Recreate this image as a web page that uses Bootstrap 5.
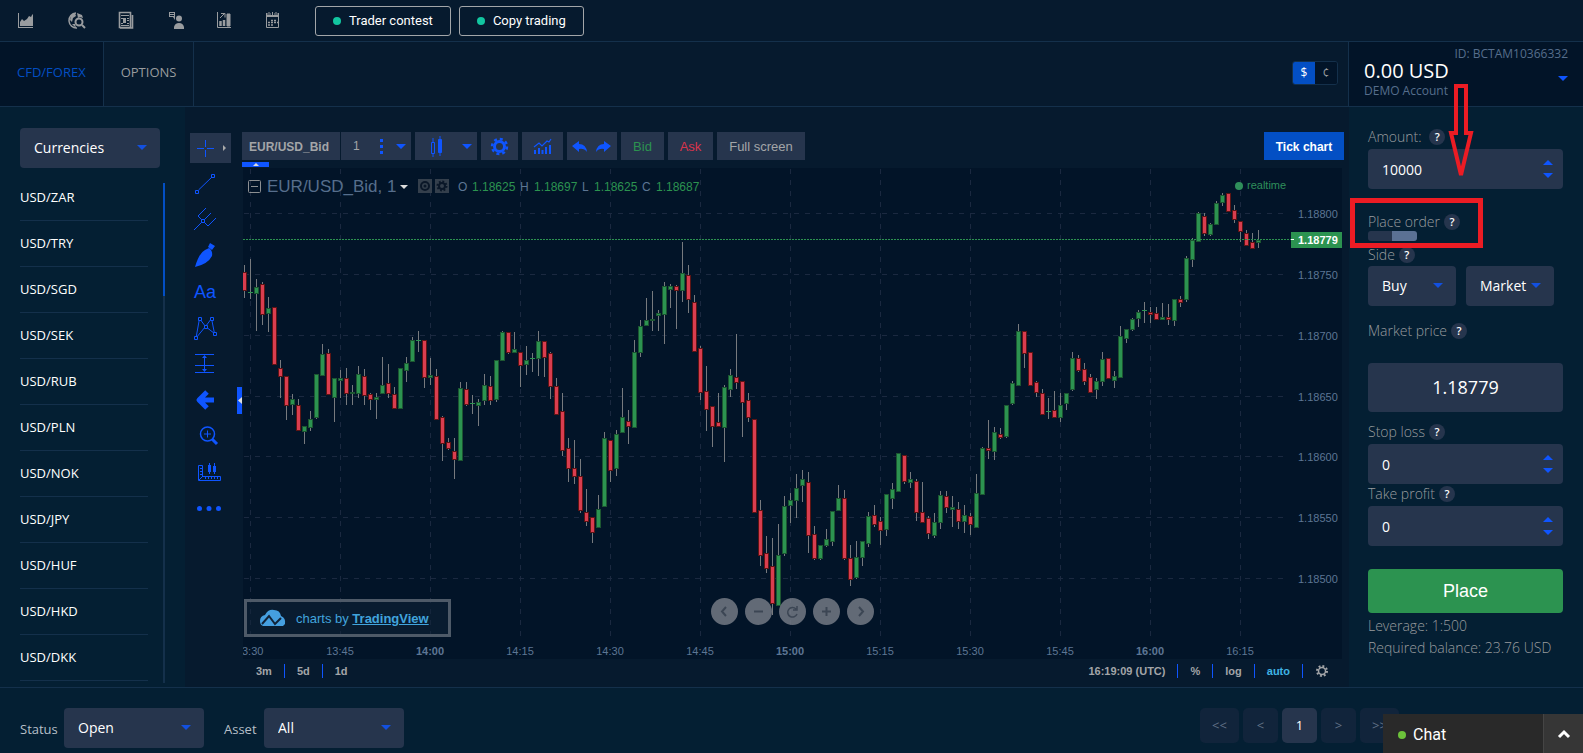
<!DOCTYPE html>
<html lang="en">
<head>
<meta charset="utf-8">
<meta name="viewport" content="width=device-width, initial-scale=1">
<title>CFD/Forex trading</title>
<link href="https://cdn.jsdelivr.net/npm/bootstrap@5.3.0/dist/css/bootstrap.min.css" rel="stylesheet">
<style>
  :root{--head:#061a2e;--page:#041f33;--pane:#021428;--line:#14304b;--field:#26354d;--blue:#0f55ff;--blue2:#034fc4;--grey:#999c9f;--slate:#566e8c;--green:#2c9350}
  body{background:var(--page);color:#fff;font:13px/20px "Open Sans",sans-serif;min-height:100vh}
  button,input,select{font-family:inherit;font-size:inherit;line-height:inherit;color:inherit}
  svg{display:block}
  .topbar{background:var(--head);border-bottom:1px solid var(--line);height:42px;padding-left:16px}
  .topicon{width:25px;height:24px;margin-right:24px;color:var(--grey);padding:0;border:0;background:none}
  .pill{height:30px;padding:0 17px;border:1px solid #a3a6a9;border-radius:3px;background:none;font:13px/20px Roboto,sans-serif}
  .pill.lead-pill{margin:0 8px 0 5px}
  .pill i{width:8px;height:8px;border-radius:50%;background:#12c6a0;margin-right:8px}
  .tabsrow{background:var(--head);border-bottom:1px solid var(--line);height:65px}
  .tabcell{border-right:1px solid var(--line);padding:0 17px 4px;color:var(--grey);text-decoration:none;height:100%}
  .tabcell.on{background:var(--pane);color:var(--blue2)}
  .unit{border:1px solid var(--line);border-radius:3px;height:24px;margin:0 10px 2px 0;font-size:12px}
  .unit button{width:22px;border:0;background:var(--pane);color:var(--grey);padding:0}
  .unit button.on{background:var(--blue2);color:#fff}
  .account{width:235px;border-left:1px solid var(--line);background:var(--pane);height:100%;padding:2px 15px;color:var(--slate);font-size:12px;position:relative}
  .account .balance{margin-top:-4px;line-height:18px}
  .account strong{font-size:20px;line-height:22px;font-weight:400;color:#fff}
  .tri{width:0;height:0;border:5px solid transparent;border-top-color:var(--blue);border-bottom:0}
  .tri.up{transform:rotate(180deg)}
  .account .tri{position:absolute;right:15px;top:34px}

  .pick{position:relative;height:40px}
  .pick select{appearance:none;width:100%;height:40px;border:0;border-radius:4px;background:var(--field);padding:0 14px;font-size:14px;outline:0}
  .pick::after{content:"";position:absolute;right:13px;top:17px;border:5px solid transparent;border-top-color:#1250e0;border-bottom:0;pointer-events:none}
  .sidebar{width:185px;padding:21px 20px 0}
  .sidewrap{position:relative;width:140px}
  .pairs{margin-top:7px;width:128px}
  .pairs a{height:46px;padding-bottom:2px;border-bottom:1px solid var(--line);color:#fff;text-decoration:none}
  .track{position:absolute;left:143px;top:55px;width:2px;height:500px;background:var(--line)}
  .track span{display:block;height:113px;background:var(--blue2)}

  .widget{background:var(--head);font-family:"Liberation Sans",sans-serif;min-width:0}
  .stage{min-width:0}
  .tools{width:58px;padding:26px 0 0 5px;position:relative;color:var(--blue)}
  .tools button{display:block;width:41px;height:36px;padding:0;border:0;background:none;color:inherit}
  .tools button.first{height:30px;background:var(--field);margin-bottom:3px}
  .tools button svg{overflow:visible}
  .handle{position:absolute;right:1px;top:280px;width:5px;height:27px;background:var(--blue)}
  .bar{height:61px;padding:25px 5px 0 0;margin-left:-1px;position:relative}
  .bar button{height:28px;border:0;background:var(--field);color:#a3a5a8;font-size:13px;line-height:28px;padding:1px 0 0;margin-right:4px}
  .bar .bold{font-size:12px;font-weight:700}
  .bar .pair{width:98px;padding-right:4px;margin-right:1px}
  .bar .period{width:70px;font-size:12px;padding:0 0 0 12px}
  .bar .style{width:62px}
  .bar .gear{width:37px}
  .bar .studies{width:41px}
  .bar .history{width:50px}
  .bar .bid{width:43px;color:var(--green)}
  .bar .ask{width:45px;color:#d9344c}
  .bar .full{width:88px}
  .bar .style svg,.bar .gear svg,.bar .studies svg,.bar .history svg{margin-top:-1px}
  .bar .tick{background:var(--blue2);color:#fff;width:80px;margin:0 0 0 auto}
  .bar .flap{position:absolute;left:0;top:55px;width:27px;height:5px;background:var(--blue)}
  .panewrap{position:relative;margin-right:7px}
  .pane{width:100%;height:auto;background:var(--pane);font-family:"Liberation Sans",sans-serif}
  .credit{position:absolute;left:1px;top:431px;width:207px;height:38px;padding:2px 0 0 13px;border:3px solid #4e5a68;background:#11233888;color:#41a4dd}
  .credit svg{margin:-2px 10px 0 0}
  .credit a{color:#41a4dd;font-weight:700}
  .navs{position:absolute;left:0;right:0;top:430px;gap:7px}
  .navs button{width:27px;height:27px;border:0;border-radius:50%;background:#7a808acc;color:#3c4654;padding:0}
  .foot{height:28px;padding:5px 8px 0 13px;color:#a3a5a8;font-size:11px;font-weight:700}
  .foot button{border:0;border-left:1px solid var(--blue);background:none;padding:0 12px;line-height:14px;font-weight:inherit}
  .foot button.plain{border-left:0;padding-left:0}
  .foot button.lit{color:#3fb4e4}

  .order{width:234px;padding:20px 20px 0 19px;font-size:14px;position:relative;color:var(--grey);font-weight:300}
  .order label{height:20px}
  .row22{height:22px}
  .order .order-label{margin-top:23px}
  .side-label{margin-top:3px}
  .sides{gap:10px}
  .price-label{margin-top:14px}
  .order .stop-label{margin-top:10px}
  .help{width:16px;height:16px;border-radius:50%;background:var(--field);color:#fff;font-size:11px;line-height:16px;font-weight:600;border:0;padding:0;margin-left:4px}
  .num{position:relative;height:40px;margin-top:2px}
  .num input{width:100%;height:40px;border:0;border-radius:4px;background:var(--field);color:#fff;font-weight:400;padding:0 14px;appearance:textfield;outline:0}
  .num input::-webkit-inner-spin-button{appearance:none}
  .num .spin{position:absolute;right:10px;top:11px;gap:8px}
  .half{width:88px;color:#fff;font-weight:400}
  .price{height:49px;margin-top:21px;padding-bottom:1px;border-radius:4px;background:var(--field);color:#fff;font-size:18px;font-weight:400}
  .switch{appearance:none;display:block;width:49px;height:10px;margin:-1px 0 0;border-radius:3px;background:linear-gradient(90deg,var(--field) 49%,#5b7194 49%)}
  .place{height:44px;margin-top:23px;border:0;border-radius:4px;background:var(--green);color:#fff;font:18px/20px "Liberation Sans",sans-serif}
  .terms{margin-top:3px}
  .marker{position:absolute;pointer-events:none}
  .marker.box{left:1px;top:91px;width:133px;height:50px;border:5px solid #ec1c24}
  .marker.arrow{left:98px;top:-23px}

  .bottom{border-top:1px solid var(--line);height:66px;padding:20px 184px 0 20px;color:#b6bfc8}
  .bottom label{width:44px;padding-top:11px}
  .bottom label.later{width:60px;padding-left:20px}
  .bottom .pick{width:140px;color:#fff}
  .pager button{height:35px;width:35px;border:0;border-radius:5px;background:#11243b;color:#617186;margin-right:4px;padding:0 0 2px}
  .pager button.wide{width:39px}
  .pager button.on{background:var(--field);color:#fff}
  .chat{position:fixed;right:0;bottom:0;width:200px;height:39px;background:#292929;border:0;padding:0;color:#fff;font:16px/20px Roboto,sans-serif}
  .chat i{width:8px;height:8px;border-radius:50%;background:#6cc23a;margin:2px 7px 0 15px}
  .chat b{font-weight:400;padding-top:2px}
  .chat .fold{width:40px;height:100%;background:#363636;border-left:1px solid #454545}
</style>
</head>
<body class="d-flex flex-column">

<header>
  <div class="topbar d-flex align-items-center">
    <button class="topicon" aria-label="Charts"><svg width="24" height="24" fill="currentColor"><path d="M2 4h1v14h14v1H2zM4 17v-4l2-3 2 2 3-2 2-3 2 1 1-2 1-1v12z"/></svg></button>
    <button class="topicon" aria-label="Market search"><svg width="24" height="24"><path d="M11 4a7.500 7.500 0 1 0 1 15" fill="none" stroke="currentColor" stroke-width="1.500"/><path d="M6 6l4-2 1 3-3 2-1 4-2-2zM12 4l5 2 1 3-3-1-2 1zM7 15l3 0 1 4z" fill="currentColor"/><circle cx="14" cy="13" r="3.500" fill="none" stroke="currentColor" stroke-width="2"/><path d="M17 16l3 3" stroke="currentColor" stroke-width="2"/></svg></button>
    <button class="topicon" aria-label="News"><svg width="24" height="24" fill="none" stroke="currentColor"><path d="M5.500 3.500h11v15h-11zM18.500 6v13H6" stroke-width="1.600"/><path d="M7 6.500h8M7 16.500h8M7 14.500h2M13 14.500h2"/><path d="M10.500 9v5" stroke-width="3"/><path d="M7 9.500h2M13 9.500h2M13 11.500h2"/></svg></button>
    <button class="topicon" aria-label="Advisers"><svg width="24" height="24" fill="currentColor"><circle cx="16" cy="9.500" r="3"/><path d="M11 20v-2q1-4 5-4t5 4v2zM6 3h6v8l-2-3H6z"/><path d="M7 4.500h4M7 6.500h4" stroke="#061a2e"/></svg></button>
    <button class="topicon" aria-label="Statistics"><svg width="24" height="24" fill="none" stroke="currentColor"><path d="M5.500 3v15.500H19"/><path d="M8.500 17v-5M12 17v-6" stroke-width="2.500"/><path d="M15 5h3v12h-3z" fill="currentColor"/><path d="M8 9l5-5M9 4.500h4v4"/></svg></button>
    <button class="topicon" aria-label="Calendar"><svg width="24" height="24" fill="none" stroke="currentColor"><path d="M5.500 5.500h12v13h-12z"/><path d="M5 6h13" stroke-width="4"/><path d="M8 2v4M11.500 2v4M15 2v4" stroke="#061a2e" stroke-width="3"/><path d="M8 3v3M11.500 3v3M15 3v3"/><path d="M10 11.500h6M7 13.500h10M7 16h6" stroke-dasharray="2 1" stroke-width="1.500"/></svg></button>
    <button class="pill lead-pill d-flex align-items-center"><i></i>Trader contest</button>
    <button class="pill d-flex align-items-center"><i></i>Copy trading</button>
  </div>
  <nav class="tabsrow d-flex align-items-center">
    <a class="tabcell on d-flex align-items-center" href="#">CFD/FOREX</a>
    <a class="tabcell d-flex align-items-center" href="#">OPTIONS</a>
    <div class="unit d-flex ms-auto overflow-hidden"><button class="on">$</button><button>¢</button></div>
    <div class="account">
      <div class="text-end">ID: BCTAM10366332</div>
      <div class="balance d-flex flex-column"><strong>0.00 USD</strong><span>DEMO Account</span></div>
      <span class="tri"></span>
    </div>
  </nav>
</header>

<main class="d-flex">
  <aside class="sidebar">
    <div class="sidewrap">
      <div class="pick"><select aria-label="Asset class"><option>Currencies</option></select></div>
      <div class="pairs" id="pairs"></div>
      <div class="track"><span></span></div>
    </div>
  </aside>

  <section class="widget d-flex flex-fill">
    <div class="tools">
      <button class="first" aria-label="Crosshair"><svg width="41" height="30" fill="none" stroke="currentColor"><path d="M15.500 7v7m0 3v7M7 15.500h7m3 0h7"/><path d="M33 12v6l3-3z" fill="#aaa" stroke="none"/></svg></button>
      <button aria-label="Trend line"><svg width="41" height="36" fill="none" stroke="currentColor"><path d="M8.500 24L22 11"/><path d="M5.500 24.500h3v3h-3zM21.500 8.500h3v3h-3z"/></svg></button>
      <button aria-label="Pitchfork"><svg width="41" height="36" fill="none" stroke="currentColor"><path d="M4 28L21 11M16 6L8 14l10 10 8-8"/><path d="M11.500 17.500h3v3h-3z" fill="#061a2e"/></svg></button>
      <button aria-label="Brush"><svg width="41" height="36" fill="currentColor"><path d="M5 29q4-14 10-17l4-2q4 3 3 8-4 8-17 11zM18 9l2-4 5 3-3 4z"/></svg></button>
      <button aria-label="Text"><svg width="41" height="36"><text x="4" y="24" font-size="18" fill="currentColor" font-family="Liberation Sans">Aa</text></svg></button>
      <button aria-label="Pattern"><svg width="41" height="36" fill="none" stroke="currentColor"><path d="M6 28L9.500 8.500l6 8 6-8 3 15-9-7z"/><path d="M4.500 26.500h3v3h-3zM8.500 7.500h3v3h-3zM14.500 15.500h3v3h-3zM20.500 7.500h3v3h-3zM23.500 22.500h3v3h-3z" fill="#061a2e"/></svg></button>
      <button aria-label="Measure"><svg width="41" height="36" fill="none" stroke="currentColor"><path d="M5 8.500h19M5 19.500h19M5 26.500h19M14.500 10v15"/><path d="M12 12l2.500-3 2.500 3zM12 23l2.500 3 2.500-3z" fill="currentColor" stroke="none"/></svg></button>
      <button aria-label="Arrow"><svg width="41" height="36" fill="none" stroke="currentColor" stroke-width="5"><path d="M17 10l-8 8 8 8M9 18h15" stroke-linejoin="round"/></svg></button>
      <button aria-label="Zoom in"><svg width="41" height="36" fill="none" stroke="currentColor"><circle cx="17.500" cy="16" r="7" stroke-width="1.500"/><path d="M14 16h7M17.500 12.500v7"/><path d="M22 21l5 5" stroke-width="3"/></svg></button>
      <button aria-label="Ruler"><svg width="41" height="36" fill="none" stroke="currentColor"><path d="M8.500 11.500h4v11h18v4h-22zM9 26l4-4"/><path d="M10 14.500h2M10 17.500h2M10 20.500h2M15.500 23v2M18.500 23v2M21.500 23v2M24.500 23v2M27.500 23v2M19.500 9v11M24.500 9v11"/><path d="M18 11h3v7h-3zM23 12h3v6h-3z" fill="currentColor" stroke="none"/></svg></button>
      <button aria-label="More"><svg width="41" height="36" fill="currentColor"><circle cx="9.500" cy="18.500" r="2.500"/><circle cx="19" cy="18.500" r="2.500"/><circle cx="28.500" cy="18.500" r="2.500"/></svg></button>
      <span class="handle"><svg width="5" height="27"><path d="M5 10v7L1 13.500z" fill="#ddd"/></svg></span>
    </div>

    <div class="stage flex-fill">
      <div class="bar d-flex">
        <button class="pair bold">EUR/USD_Bid</button>
        <button class="period d-flex align-items-center">1<svg class="ms-auto" width="33" height="28" fill="#0f55ff"><path d="M2 7h3v3H2zM2 13h3v3H2zM2 19h3v3H2zM18 12h10l-5 5z"/></svg></button>
        <button class="style" aria-label="Candles"><svg width="62" height="28" fill="#0f55ff" stroke="#0f55ff"><path d="M16.500 10.500h3v11h-3z" fill="none"/><path d="M18 6v4M18 22v3M25 4v20"/><path d="M23.500 7.500h3v13h-3z"/><path d="M47 12h10l-5 5z" stroke="none"/></svg></button>
        <button class="gear" aria-label="Settings"><svg width="37" height="28" fill="none" stroke="#0f55ff"><circle cx="18.500" cy="14.500" r="5" stroke-width="3"/><circle cx="18.500" cy="14.500" r="7.500" stroke-width="2.500" stroke-dasharray="3 2.900"/></svg></button>
        <button class="studies" aria-label="Indicators"><svg width="41" height="28" fill="none" stroke="#0f55ff"><path d="M12 15l5-4 3 3 5-5 2 1 2-3" stroke-width="1.200"/><path d="M13 22v-4M17 22v-6M20.500 22v-4M24 22v-7M28 22v-9" stroke-width="2"/></svg></button>
        <button class="history" aria-label="Undo and redo"><svg width="50" height="28" fill="#0f55ff"><path d="M5 14l7-5v3q7 0 8 8-3-4-8-3v3zM44 14l-7-5v3q-7 0-8 8 3-4 8-3v3z"/></svg></button>
        <button class="bid">Bid</button>
        <button class="ask">Ask</button>
        <button class="full">Full screen</button>
        <button class="tick bold">Tick chart</button>
        <span class="flap"><svg width="27" height="5"><path d="M11 4h6l-3-3z" fill="#ddd"/></svg></span>
      </div>
      <div class="panewrap">
        <svg class="pane" id="pane" viewBox="0 0 1099 491" role="img" aria-label="EUR/USD price chart"></svg>
        <div class="credit d-flex align-items-center"><svg width="26" height="18"><path d="M0 12q0-5 5-6 3-6 9-5 6 0 7 6 5 2 4 8l-2 2H3q-3-1-3-5z" fill="#459fe0"/><path d="M2 15l7-8 6 8 6-6" fill="none" stroke="#112338" stroke-width="2"/></svg>charts by&nbsp;<a href="#">TradingView</a></div>
        <div class="navs d-flex justify-content-center">
          <button aria-label="Back"><svg width="27" height="27" fill="none" stroke="currentColor" stroke-width="2"><path d="M15 9l-4 4.500 4 4.500"/></svg></button>
          <button aria-label="Zoom out"><svg width="27" height="27" stroke="currentColor" stroke-width="2"><path d="M9 13.500h9"/></svg></button>
          <button aria-label="Reset"><svg width="27" height="27" fill="none" stroke="currentColor" stroke-width="1.500"><path d="M17 11a4.800 4.800 0 1 0 1 5M14 12h4V8"/></svg></button>
          <button aria-label="Enlarge"><svg width="27" height="27" stroke="currentColor" stroke-width="2"><path d="M9 13.500h9M13.500 9v9"/></svg></button>
          <button aria-label="Forward"><svg width="27" height="27" fill="none" stroke="currentColor" stroke-width="2"><path d="M12 9l4 4.500-4 4.500"/></svg></button>
        </div>
      </div>
      <div class="foot d-flex align-items-start">
        <button class="plain">3m</button><button>5d</button><button>1d</button>
        <button class="plain ms-auto">16:19:09 (UTC)</button><button>%</button><button>log</button><button class="lit">auto</button>
        <button aria-label="Scale settings"><svg width="14" height="14" fill="none" stroke="currentColor"><circle cx="7" cy="7" r="3.500" stroke-width="1.500"/><circle cx="7" cy="7" r="5" stroke-width="2" stroke-dasharray="1.900 2"/></svg></button>
      </div>
    </div>
  </section>

  <section class="order">
    <label class="d-flex align-items-center" for="amount">Amount:&nbsp;<button class="help">?</button></label>
    <div class="num"><input id="amount" type="number" value="10000"><span class="spin d-flex flex-column"><i class="tri up"></i><i class="tri"></i></span></div>
    <label class="order-label d-flex align-items-center" for="pending">Place order<button class="help">?</button></label>
    <input class="switch" id="pending" type="checkbox" checked>
    <div class="row22 side-label d-flex align-items-center"><label for="side">Side</label><button class="help">?</button></div>
    <div class="sides d-flex">
      <div class="pick half"><select id="side"><option>Buy</option></select></div>
      <div class="pick half"><select aria-label="Order type"><option>Market</option></select></div>
    </div>
    <div class="row22 price-label d-flex align-items-center">Market price<button class="help">?</button></div>
    <div class="price d-flex align-items-center justify-content-center">1.18779</div>
    <label class="stop-label d-flex align-items-center" for="stop">Stop loss<button class="help">?</button></label>
    <div class="num"><input id="stop" type="number" value="0"><span class="spin d-flex flex-column"><i class="tri up"></i><i class="tri"></i></span></div>
    <label class="d-flex align-items-center" for="take">Take profit<button class="help">?</button></label>
    <div class="num"><input id="take" type="number" value="0"><span class="spin d-flex flex-column"><i class="tri up"></i><i class="tri"></i></span></div>
    <button class="place w-100">Place</button>
    <div class="row22 terms">Leverage: 1:500</div>
    <div class="row22 text-nowrap">Required balance: 23.76 USD</div>
    <span class="marker box"></span>
    <svg class="marker arrow" width="30" height="100" fill="none" stroke="#ec1c24" stroke-width="4"><path d="M9 2h10v47h5L14 91 4 49h5z"/></svg>
  </section>
</main>

<footer class="bottom d-flex align-items-start flex-fill">
  <label for="status">Status</label>
  <div class="pick"><select id="status"><option>Open</option></select></div>
  <label class="later" for="asset">Asset</label>
  <div class="pick"><select id="asset"><option>All</option></select></div>
  <div class="pager d-flex ms-auto"><button class="wide">&lt;&lt;</button><button>&lt;</button><button class="on">1</button><button>&gt;</button><button class="wide m-0">&gt;&gt;</button></div>
</footer>
<button class="chat d-flex align-items-center"><i></i><b>Chat</b><span class="fold ms-auto d-flex align-items-center justify-content-center"><svg width="14" height="10" fill="none" stroke="#fff" stroke-width="3"><path d="M2 8l5-5 5 5"/></svg></span></button>

<script src="https://cdn.jsdelivr.net/npm/bootstrap@5.3.0/dist/js/bootstrap.bundle.min.js"></script>
<script>
document.getElementById('pairs').innerHTML = ['ZAR','TRY','SGD','SEK','RUB','PLN','NOK','JPY','HUF','HKD','DKK']
  .map(c => `<a class="d-flex align-items-center" href="#">USD/${c}</a>`).join('');

// One candle per minute: high, body top, body bottom, low; r falls, g rises. Three units make one pixel.
const quotes = `135 156 213 234 r,117 216 219 237 g,177 201 222 333 g,186 192 285 315 r,231 264 282 336 g,261 261 435 435 r,420 444 471 534 r,468 468 558 600 r,522 537 555 585 g,537 555 633 633 r,
618 618 636 672 g,573 597 624 633 g,462 462 594 597 g,372 402 468 468 g,387 399 525 525 r,474 474 534 606 g,450 474 483 534 g,444 474 522 555 r,495 516 522 555 g,438 462 522 534 g,
447 468 528 555 r,519 522 540 570 r,519 531 540 597 g,411 495 522 522 g,432 489 522 534 r,501 522 567 567 r,444 444 567 567 g,411 429 453 486 g,351 360 426 426 g,333 360 363 396 g,
360 360 474 504 r,414 465 474 495 g,447 468 600 600 r,588 591 672 723 r,654 666 687 690 r,654 693 720 777 r,486 504 723 723 g,486 507 555 558 r,525 549 552 582 g,537 546 558 618 g,
462 495 543 555 g,468 498 543 555 r,420 420 540 546 g,333 336 423 423 g,336 336 399 402 r,336 387 399 399 g,396 396 438 501 r,378 420 435 465 g,399 414 417 456 g,333 363 417 468 g,
363 363 414 471 r,396 399 501 537 r,474 498 585 585 r,519 573 693 708 r,654 684 747 786 r,660 744 771 792 r,717 768 873 879 r,807 876 907 918 r,892 892 939 969 r,825 867 924 924 g,
636 654 861 861 g,660 660 753 786 r,630 642 747 768 g,504 591 639 639 g,570 603 621 672 r,360 396 624 624 g,300 318 399 411 g,234 300 318 318 g,213 297 303 333 g,270 279 288 333 g,
186 198 285 372 g,192 198 210 264 g,195 198 213 327 r,66 159 213 246 g,135 165 240 279 r,225 246 396 396 r,378 384 519 540 r,438 513 570 633 r,558 558 621 681 r,519 606 621 621 r,
495 501 624 726 g,447 465 510 531 g,342 471 489 507 r,483 483 549 651 r,519 540 594 606 r,597 597 879 879 r,840 870 1008 1038 r,948 999 1047 1059 r,954 1038 1152 1185 r,912 1005 1158 1158 g,
828 858 1002 1008 g,819 840 858 909 g,762 804 843 894 g,750 777 798 846 g,756 786 948 999 r,918 942 1017 1020 r,975 975 1017 1020 g,927 957 978 981 g,873 873 966 978 g,795 834 873 873 g,
810 834 1017 1020 r,975 1014 1080 1098 r,963 1011 1074 1077 g,963 963 1014 1038 g,876 888 972 981 g,855 885 915 921 r,891 903 933 975 r,822 822 930 948 g,789 807 837 867 g,699 699 816 816 g,
705 705 786 792 r,756 777 789 804 g,777 783 879 903 r,786 876 909 909 r,888 894 942 957 r,879 906 948 954 g,813 825 909 927 g,813 828 864 879 r,828 861 870 921 g,846 867 906 927 r,
855 885 906 939 g,879 888 915 945 r,762 819 924 924 g,681 684 825 825 g,600 684 693 717 r,621 636 696 720 g,624 642 654 657 r,555 555 651 654 g,483 489 552 555 g,312 333 498 498 g,
333 333 402 444 r,396 396 498 498 r,483 486 519 531 r,507 519 585 585 r,534 573 576 597 g,513 570 594 594 r,519 555 594 606 g,519 519 552 570 g,396 414 510 513 g,405 414 453 456 r,
429 447 486 495 r,462 471 519 519 r,474 483 510 537 g,396 417 486 498 g,414 414 477 477 r,453 468 483 504 g,318 348 474 474 g,327 327 357 369 g,294 297 330 333 g,270 276 297 321 g,
246 270 273 309 g,261 276 285 309 r,261 279 300 300 r,249 291 300 300 g,252 291 300 315 r,237 237 303 318 g,228 237 249 261 r,108 114 240 246 g,54 60 120 141 g,-24 -21 66 66 g,
-21 -12 42 48 r,9 12 45 48 g,-57 -51 15 15 g,-81 -75 -51 -42 g,-81 -81 -24 -24 r,-45 -30 0 9 r,3 3 36 66 r,30 39 78 78 r,39 66 87 87 r,30 60 69 84 g`;

let s = '<g shape-rendering="crispEdges" stroke="#1b2940" stroke-dasharray="5 6">';
for (let x = 7; x < 1040; x += 90) s += `<path d="M${x}.5 1V469"/>`;
const rows = [45, 106, 167, 228, 288, 349, 410];
rows.forEach(y => s += `<path d="M1 ${y}.5H1042"/>`);
s += '</g><g shape-rendering="crispEdges">';
quotes.split(',').forEach((q, i) => {
  const v = q.trim().split(' '), x = 1 + 6 * i;
  const [h, t, b, l] = v.slice(0, 4).map(n => Math.round(n / 3) + 52);
  const up = v[4] === 'g';
  s += `<rect x="${x}" y="${h}" width="1" height="${l - h}" fill="#777a7e"/>`;
  if (b - t < 2) { s += `<rect x="${x - 2}" y="${t}" width="5" height="1" fill="#2c9350"/>`; return; }
  s += `<rect x="${x - 2}" y="${t}" width="5" height="${b - t}" fill="${up ? '#1c5631' : '#5e1414'}"/>`;
  if (b - t > 2) s += `<rect x="${x - 1}" y="${t + 1}" width="3" height="${b - t - 2}" fill="${up ? '#2c9350' : '#d93d4f'}"/>`;
});
s += '<path d="M0 71.5H1048" stroke="#2c9350" stroke-dasharray="2 1"/><rect x="1048" y="64" width="51" height="16" fill="#2c9350"/><path d="M1048 71.5h3" stroke="#fff"/></g>';
s += '<g font-size="11" fill="#5d7694">';
rows.forEach((y, i) => s += `<text x="1055" y="${y + 5}">${(1.188 - i * 0.0005).toFixed(5)}</text>`);
s += '<text x="1055" y="76" fill="#fff" font-weight="700">1.18779</text><text x="-1" y="487">3:30</text>';
['13:45','14:00','14:15','14:30','14:45','15:00','15:15','15:30','15:45','16:00','16:15'].forEach((t, i) =>
  s += `<text x="${97 + 90 * i}" y="487" text-anchor="middle"${t.endsWith('00') ? ' font-weight="700"' : ''}>${t}</text>`);
s += '<circle cx="996" cy="18" r="4" fill="#2f8f5b"/><text x="1004" y="21" fill="#2f8f5b">realtime</text></g>';
// legend
s += '<rect x="5.500" y="12.500" width="12" height="12" rx="1" fill="none" stroke="#8c8f92"/><path d="M8 18.500h7" stroke="#8c8f92"/>';
s += '<text x="24" y="24" font-size="17" fill="#566e8c">EUR/USD_Bid, 1</text><path d="M157 17h8l-4 4z" fill="#ddd"/>';
s += '<path d="M175 11h14v14h-14zM192 11h14v14h-14z" fill="#343f4c"/><g fill="none" stroke="#0a1728" stroke-width="2"><circle cx="182" cy="18" r="4"/><circle cx="199" cy="18" r="3"/><circle cx="199" cy="18" r="4.500" stroke-dasharray="1.800 1.700"/></g><circle cx="182" cy="18" r="1.500" fill="#0a1728"/>';
[['O',215,'1.18625',229],['H',277,'1.18697',291],['L',339,'1.18625',351],['C',399,'1.18687',413]].forEach(a =>
  s += `<text x="${a[1]}" y="23" font-size="12" fill="#5d7694">${a[0]}</text><text x="${a[3]}" y="23" font-size="12" fill="#2c9350">${a[2]}</text>`);
document.getElementById('pane').innerHTML = s;
</script>
</body>
</html>
